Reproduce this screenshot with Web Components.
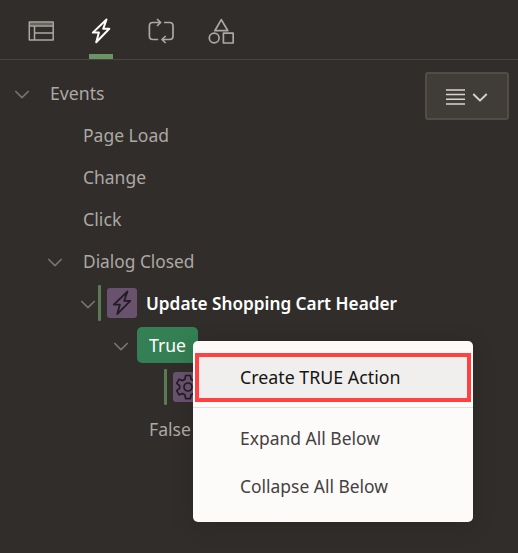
<!DOCTYPE html>
<html lang="en">
<head>
<meta charset="utf-8">
<title>Dynamic Actions</title>
<style>
html,body{margin:0;height:100%;background:#312d2a;overflow:hidden}
body{font:18px/24px "Noto Sans","Open Sans",sans-serif;color:#aca8a4}
</style>
</head>
<body>
<action-panel></action-panel>
<script>
const define = (name, html, setup) => customElements.define(name, class extends HTMLElement {
  connectedCallback() {
    if (this.shadowRoot) return;
    const template = document.createElement('template');
    template.innerHTML = html;
    this.attachShadow({ mode: 'open' }).append(template.content.cloneNode(true));
    if (setup) setup(this, this.shadowRoot);
  }
});

/* Label condensed or widened to a given advance width. */
define('fit-label', `<style>
:host{display:block;white-space:nowrap;overflow:visible;height:24px;flex:none}
span{display:inline-block;transform-origin:0 0}
</style><span><slot></slot></span>`, (el, root) => {
  const width = +el.getAttribute('w');
  const span = root.querySelector('span');
  el.style.width = width + 'px';
  span.style.transform = 'scaleX(' + width / span.getBoundingClientRect().width + ')';
});

const icons = {
  page: ['0 0 26 20', '<path d="M1.3 1h23.9v18H1.3zM1.3 5h24M6.5 5v14M6.5 12H25" stroke-width="1.5"/><path d="M1.5 3h23" stroke-width="2.5" opacity=".45"/>'],
  bolt: ['0 0 20 26', '<path d="M15.5 1.5 1.8 14.6h6.1L5.2 24.2 18.3 10.8h-6.1z"/>'],
  cycle: ['0 0 26 26', '<path d="M10.2 21.5H4.8Q1.4 21.5 1.4 18V8Q1.4 4.5 4.8 4.5h7.6M9 1l3.7 3.5L9 8M16 4.5h5.6Q25 4.5 25 8v10q0 3.5-3.4 3.5h-7.4M17.7 18 14 21.5l3.7 3.5"/>'],
  shapes: ['0 0 26 26', '<path d="M13.3 1.6 19.8 12.7H6.8z"/><circle cx="6.2" cy="20" r="4.9"/><path d="M15.4 15.2h9.8V25h-9.8z"/>'],
  lines: ['0 0 20 18', '<path d="M0 2h19M0 6.5h19M0 11.2h19M0 16h19" stroke-width="1.6"/>'],
  chevron: ['0 0 16 10', '<path d="m1.3 2 6.7 6.6 6.7-6.6"/>'],
  gear: ['0 0 26 26', '<path d="M10.6 1.5h4.8l.6 3.7 2.4 1.4 3.5-1.4 2.4 4.2-2.9 2.3v2.7l2.9 2.3-2.4 4.2-3.5-1.4-2.4 1.4-.6 3.7h-4.8L10 20.9l-2.4-1.4-3.5 1.4-2.4-4.2 2.9-2.3v-2.7L1.7 9.4l2.4-4.2 3.5 1.4L10 5.2z"/><circle cx="13" cy="13" r="4"/>']
};
define('line-icon', `<style>
:host{display:block;flex:none}
svg{display:block;width:100%;height:100%;fill:none;stroke:currentColor;stroke-width:var(--stroke,1.7);stroke-linejoin:round}
</style><svg></svg>`, (el, root) => {
  const [box, shapes] = icons[el.getAttribute('name')];
  const svg = root.querySelector('svg');
  svg.setAttribute('viewBox', box);
  svg.innerHTML = shapes;
  const [, , w, h] = box.split(' ');
  el.style.width = (el.getAttribute('w') || w) + 'px';
  el.style.height = (el.getAttribute('h') || h) + 'px';
});

define('panel-tab', `<style>
:host{display:flex;box-sizing:border-box;width:60px;height:59px;padding-top:2px;align-items:center;justify-content:center;color:#aca8a4;
 background:linear-gradient(var(--mark,transparent),var(--mark,transparent)) 18px 100%/24px 5px no-repeat}
:host([active]){color:#fff;--mark:#6b9365;--stroke:2}
</style><slot></slot>`);

define('panel-tabs', `<style>
:host{display:flex;height:59px;padding-left:11px;border-bottom:1px solid #484440}
</style>
<panel-tab><line-icon name="page"></line-icon></panel-tab>
<panel-tab active><line-icon name="bolt"></line-icon></panel-tab>
<panel-tab><line-icon name="cycle"></line-icon></panel-tab>
<panel-tab><line-icon name="shapes"></line-icon></panel-tab>`);

define('menu-button', `<style>
:host{display:flex;box-sizing:border-box;width:84px;height:48px;border:2px solid #514d45;border-radius:3px;background:#403c37;color:#d9d4cf;align-items:center;padding:2px 0 0 19px;gap:6px;flex:none;--stroke:1.9}
</style><line-icon name="lines"></line-icon><line-icon name="chevron"></line-icon>`);

define('tree-row', `<style>
:host{display:flex;align-items:center;height:42px}
.toggle{width:16px;padding-top:1px;margin-right:var(--after,20px);color:#797571;flex:none}
.toggle line-icon{--stroke:1.6}
</style><div class="toggle"></div><slot></slot>`, (el, root) => {
  el.style.paddingLeft = 14 + 33 * +el.getAttribute('level') + 'px';
  if (el.hasAttribute('open')) root.querySelector('.toggle').innerHTML = '<line-icon name="chevron"></line-icon>';
});

define('action-badge', `<style>
:host{display:flex;align-items:center;flex:none}
.bar{width:3px;height:36px;border-radius:1px;background:#5b7a54;margin-right:6px}
.tile{width:30px;height:30px;border-radius:3px;background:#69526e;color:#221c24;display:flex;align-items:center;justify-content:center}
</style><div class="bar"></div><div class="tile"><slot></slot></div>`);

define('selected-node', `<style>
:host{display:flex;align-items:center;box-sizing:border-box;width:61px;height:36px;padding-left:12px;border-radius:5px;background:#347f54;color:#fff}
</style><slot></slot>`);

define('menu-item', `<style>
:host{display:flex;align-items:center;height:48px;padding-left:47px;color:#45413e}
:host([highlighted]){box-sizing:border-box;height:49px;margin:0 2px -1px;padding:0 0 1px 41px;border:4px solid #ff4141;background:#f0efee;color:#161513}
</style><slot></slot>`);

define('context-menu', `<style>
:host{display:block;box-sizing:border-box;position:absolute;left:193px;top:341px;width:280px;height:181px;padding-top:12px;border-radius:5px;background:#fcfbfa;box-shadow:0 4px 24px rgba(0,0,0,.13)}
.rule{height:1px;background:#e2e0df;margin:6px 0}
</style>
<menu-item highlighted><fit-label w="160.5">Create TRUE Action</fit-label></menu-item>
<div class="rule"></div>
<menu-item><fit-label w="140">Expand All Below</fit-label></menu-item>
<menu-item><fit-label w="148">Collapse All Below</fit-label></menu-item>`);

define('action-panel', `<style>
:host{display:block;position:relative;height:553px}
main{display:flex;justify-content:space-between;padding:12px 9px 0 0}
.tree{flex:1}
.title{margin-left:9px;color:#fff;font-weight:600}
</style>
<panel-tabs></panel-tabs>
<main>
<div class="tree">
<tree-row level="0" open><fit-label w="54.5">Events</fit-label></tree-row>
<tree-row level="1"><fit-label w="86">Page Load</fit-label></tree-row>
<tree-row level="1"><fit-label w="63">Change</fit-label></tree-row>
<tree-row level="1"><fit-label w="38.5">Click</fit-label></tree-row>
<tree-row level="1" open><fit-label w="111.5">Dialog Closed</fit-label></tree-row>
<tree-row level="2" open style="--after:2px"><action-badge><line-icon name="bolt" style="--stroke:1.8"></line-icon></action-badge><fit-label class="title" w="251">Update Shopping Cart Header</fit-label></tree-row>
<tree-row level="3" open style="--after:8px"><selected-node><fit-label w="37">True</fit-label></selected-node></tree-row>
<tree-row level="4" style="--after:2px"><action-badge><line-icon name="gear"></line-icon></action-badge></tree-row>
<tree-row level="3"><fit-label w="42">False</fit-label></tree-row>
</div>
<menu-button></menu-button>
</main>
<context-menu></context-menu>`);
</script>
</body>
</html>
